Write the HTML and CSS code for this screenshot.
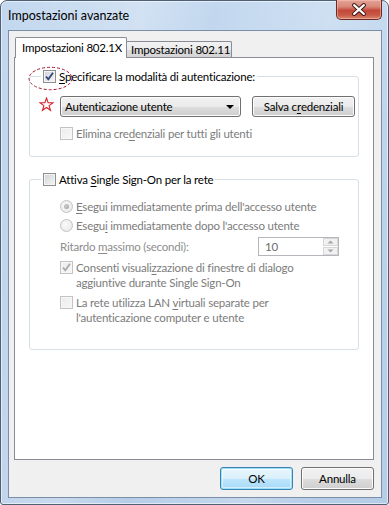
FILE: index.html
```html
<!DOCTYPE html>
<html lang="it">
<head>
<meta charset="utf-8">
<title>Impostazioni avanzate</title>
<link rel="stylesheet" href="styles.css">
</head>
<body>
<div class="window">
  <div class="titlebar">
    <span class="title">Impostazioni avanzate</span>
    <div class="close">
      <svg width="45" height="20" viewBox="0 0 45 20">
        <path d="M17.5 5 L27.5 14 M27.5 5 L17.5 14" stroke="#3b1512" stroke-width="4.2" stroke-linecap="round" fill="none"/>
        <path d="M17.5 5 L27.5 14 M27.5 5 L17.5 14" stroke="#ffffff" stroke-width="2.2" stroke-linecap="round" fill="none"/>
      </svg>
    </div>
  </div>
  <div class="client">
    <div class="tabs">
      <div class="tab active">Impostazioni 802.1X</div>
      <div class="tab">Impostazioni 802.11</div>
    </div>
    <div class="panel">
      <svg class="mark-ellipse" width="45" height="25" viewBox="0 0 45 25">
        <ellipse cx="22.5" cy="12.5" rx="21.5" ry="11.2" fill="none" stroke="#a3162a" stroke-width="1" stroke-dasharray="3 2"/>
      </svg>
      <fieldset class="group g1">
        <legend class="legend">
          <span class="cb"><svg width="11" height="11" viewBox="0 0 11 11"><path d="M2 5.5 L4.3 8.3 L9 1.8" stroke="#31457a" stroke-width="1.8" fill="none"/></svg></span>
          <span><u>S</u>pecificare la modalità di autenticazione:</span>
        </legend>
        <div class="gbody">
          <div class="auth-row">
            <svg class="star" width="15" height="15" viewBox="0 0 15 15">
              <path d="M7.5 1 L9.1 5.6 L14 5.7 L10.1 8.6 L11.5 13.3 L7.5 10.5 L3.5 13.3 L4.9 8.6 L1 5.7 L5.9 5.6 Z" fill="none" stroke="#d8242e" stroke-width="1.1" stroke-linejoin="miter"/>
            </svg>
            <div class="combo"><span>Autenticazione utente</span><span class="arrow"></span></div>
            <div class="btn save">Salva c<u>r</u>edenziali</div>
          </div>
          <div class="opt dis e1"><span class="cb dis"></span><span>Elimina cre<u>d</u>enziali per tutti gli utenti</span></div>
        </div>
      </fieldset>
      <fieldset class="group g2">
        <legend class="legend">
          <span class="cb"></span>
          <span>Attiva <u>S</u>ingle Sign-On per la rete</span>
        </legend>
        <div class="gbody">
          <div class="opt dis r1"><span class="rb dis on"></span><span><u>E</u>segui immediatamente prima dell'accesso utente</span></div>
          <div class="opt dis r2"><span class="rb dis"></span><span>Esegu<u>i</u> immediatamente dopo l'accesso utente</span></div>
          <div class="delay-row">
            <span class="delay-label">Ritardo <u>m</u>assimo (secondi):</span>
            <div class="spin">
              <span class="spin-val">10</span>
              <span class="spin-btns">
                <span class="sb"><svg width="7" height="4" viewBox="0 0 7 4"><path d="M0.5 3.5 L3.5 0.5 L6.5 3.5 Z" fill="#a7a7a7"/></svg></span>
                <span class="sb"><svg width="7" height="4" viewBox="0 0 7 4"><path d="M0.5 0.5 L3.5 3.5 L6.5 0.5 Z" fill="#a7a7a7"/></svg></span>
              </span>
            </div>
          </div>
          <div class="opt dis c1"><span class="cb dis"><svg width="11" height="11" viewBox="0 0 11 11"><path d="M2 5.5 L4.3 8.3 L9 1.8" stroke="#a9a9a9" stroke-width="1.8" fill="none"/></svg></span><span>Consenti visuali<u>z</u>zazione di finestre di dialogo<br>aggiuntive durante Single Sign-On</span></div>
          <div class="opt dis c2"><span class="cb dis"></span><span>La rete utilizza LAN <u>v</u>irtuali separate per<br>l'autenticazione computer e utente</span></div>
        </div>
      </fieldset>
    </div>
    <div class="buttons">
      <div class="btn default">OK</div>
      <div class="btn">Annulla</div>
    </div>
  </div>
</div>
</body>
</html>
```

FILE: styles.css
```css
* { box-sizing: border-box; }
html, body { margin: 0; padding: 0; background: #ffffff; }
body {
  font-family: "Lato", "Noto Sans", sans-serif;
  font-size: 11.5px;
  letter-spacing: -0.2px;
  color: #000;
  width: 389px;
  height: 505px;
  overflow: hidden;
}
u { text-decoration: underline; text-underline-offset: 2px; text-decoration-thickness: 1px; }

.window {
  width: 389px;
  height: 505px;
  border: 1px solid #4f5f74;
  border-radius: 7px 7px 3px 3px;
  background:
    linear-gradient(100deg, rgba(255,255,255,0) 0%, rgba(255,255,255,.25) 30%, rgba(255,255,255,0) 45%, rgba(255,255,255,.2) 70%, rgba(255,255,255,0) 85%),
    linear-gradient(#c3d8ef, #bcd3ec 40%, #b6cde8);
  box-shadow: inset 0 0 0 1px rgba(255,255,255,.55);
  padding: 0 6px 6px 7px;
  display: flex;
  flex-direction: column;
}

.titlebar {
  height: 29px;
  display: flex;
  justify-content: space-between;
  align-items: flex-start;
}
.title {
  margin-top: 7px;
  line-height: 16px;
  color: #000;
  font-size: 12.5px;
  letter-spacing: 0;
}
.close {
  width: 46px;
  height: 20px;
  margin-top: -1px;
  border: 1px solid #6b2b24;
  border-top: none;
  border-radius: 0 0 5px 5px;
  background: linear-gradient(#e3a397 0%, #d88878 35%, #c4473a 55%, #c85a48 80%, #d98a6e 100%);
  box-shadow: inset 0 0 0 1px rgba(255,200,190,.5);
  display: flex;
  align-items: center;
  justify-content: center;
}
.close svg { display: block; }

.client {
  flex: 1;
  border: 1px solid #7b8ea7;
  background: #f0f0f0;
  padding: 6px 7px 7px 5px;
  display: flex;
  flex-direction: column;
}

.tabs {
  display: flex;
  align-items: flex-end;
  height: 21px;
  margin-bottom: -1px;
  padding-left: 1px;
  position: relative;
  z-index: 2;
}
.tab {
  height: 16px;
  margin-bottom: 1px;
  width: 106px;
  margin-left: -1px;
  border: 1px solid #898c95;
  border-bottom: none;
  border-radius: 2px 2px 0 0;
  background: linear-gradient(#f2f2f2, #ebebeb 50%, #dddddd 50%, #d4d4d4);
  line-height: 16px;
  padding-left: 4px;
  white-space: nowrap;
}
.tab.active {
  height: 21px;
  width: 112px;
  margin-left: 0;
  margin-bottom: 0;
  background: #ffffff;
  position: relative;
  z-index: 2;
  line-height: 19px;
  padding-left: 6px;
}

.panel {
  flex: 1;
  position: relative;
  background: #ffffff;
  border: 1px solid #898c95;
  padding: 11px 14px 0 14px;
}

.mark-ellipse {
  position: absolute;
  left: 13px;
  top: 8px;
}

.group {
  margin: 0;
  min-width: 0;
  border: 1px solid #d5dfe5;
  border-radius: 3px;
  padding: 0 0 15px 11px;
}
.group.g2 { margin-top: 15px; padding-bottom: 24px; }
.legend {
  padding: 0 2px;
  height: 15px;
  display: flex;
  align-items: center;
  gap: 3px;
  line-height: 15px;
}
.gbody { margin-left: 19px; }

.cb {
  flex: none;
  width: 13px;
  height: 13px;
  border: 1px solid #8e8f8f;
  background: linear-gradient(135deg, #d0d2d6, #f6f6f6);
  box-shadow: inset 0 0 0 1px #f4f4f4;
  display: flex;
  align-items: center;
  justify-content: center;
}
.cb svg { display: block; }
.cb.dis {
  border-color: #c3c3c3;
  background: linear-gradient(135deg, #ececec, #f7f7f7);
  box-shadow: inset 0 0 0 1px #f7f7f7;
}
.rb {
  flex: none;
  width: 13px;
  height: 13px;
  border-radius: 50%;
  border: 1px solid #8e8f8f;
  background: radial-gradient(circle at 40% 40%, #f7f7f7, #d5d5d5);
  display: flex;
  align-items: center;
  justify-content: center;
}
.rb.dis {
  border-color: #c2c2c2;
  background: radial-gradient(circle at 40% 40%, #fafafa, #e6e6e6);
}
.rb.on::after {
  content: "";
  width: 5px;
  height: 5px;
  border-radius: 50%;
  background: radial-gradient(circle at 40% 40%, #cfcfcf, #9c9c9c);
}

.opt {
  display: flex;
  gap: 3px;
  align-items: flex-start;
  line-height: 15px;
}
.opt .cb, .opt .rb { margin-top: 1px; }
.opt.dis { color: #7c7c7c; }

.auth-row {
  position: relative;
  margin-top: 12px;
  display: flex;
  align-items: center;
  gap: 11px;
  height: 21px;
}
.star {
  position: absolute;
  left: -21px;
  top: 1px;
}
.combo {
  width: 181px;
  height: 21px;
  border: 1px solid #707070;
  border-radius: 3px;
  background: linear-gradient(#f2f2f2, #ebebeb 50%, #dddddd 50%, #cfcfcf);
  box-shadow: inset 0 0 0 1px #fcfcfc;
  display: flex;
  align-items: center;
  justify-content: space-between;
  padding: 0 6px 0 4px;
  line-height: 15px;
}
.arrow {
  width: 0;
  height: 0;
  border-left: 4px solid transparent;
  border-right: 4px solid transparent;
  border-top: 4px solid #000;
}
.btn {
  height: 21px;
  border: 1px solid #707070;
  border-radius: 3px;
  background: linear-gradient(#f2f2f2, #ebebeb 50%, #dddddd 50%, #cfcfcf);
  box-shadow: inset 0 0 0 1px #fcfcfc;
  display: flex;
  align-items: center;
  justify-content: center;
  line-height: 15px;
}
.btn.save { width: 103px; }

.e1 { margin-top: 9px; }
.r1 { margin-top: 12px; }
.r2 { margin-top: 4px; }
.delay-row {
  margin-top: 3px;
  display: flex;
  align-items: center;
  height: 20px;
  color: #8d8d8d;
}
.delay-label { width: 198px; line-height: 15px; }
.spin {
  width: 81px;
  height: 19px;
  border: 1px solid #b4b6bb;
  background: #fff;
  display: flex;
  align-items: stretch;
  color: #6d6d6d;
}
.spin-val { flex: 1; padding-left: 6px; line-height: 17px; }
.spin-btns {
  width: 15px;
  display: flex;
  flex-direction: column;
  gap: 1px;
}
.sb {
  flex: 1;
  border: 1px solid #d6d6d6;
  background: #f1f1f1;
  display: flex;
  align-items: center;
  justify-content: center;
}
.sb svg { display: block; }
.c1 { margin-top: 4px; }
.c2 { margin-top: 5px; }

.buttons {
  margin-top: 7px;
  display: flex;
  justify-content: flex-end;
  gap: 8px;
}
.buttons .btn { width: 73px; height: 23px; }
.btn.default {
  border-color: #3c7fb1;
  background: linear-gradient(#eaf6fd, #d9f0fc 50%, #bee6fd 50%, #a7d9f5);
  box-shadow: inset 0 0 0 1px #9be2f9, inset 0 0 0 2px rgba(255,255,255,.5);
}
```
